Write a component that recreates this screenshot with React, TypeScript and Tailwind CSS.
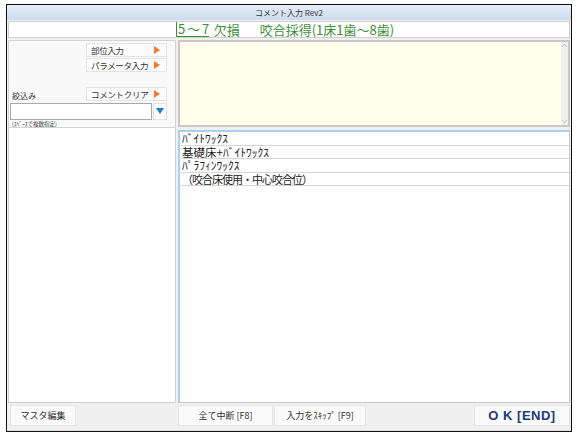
const jp = { fontFamily: '"Noto Sans CJK JP", "Noto Sans", sans-serif' };

function Arrow() {
  return (
    <svg width="6" height="8" viewBox="0 0 6 8" className="shrink-0">
      <path d="M0 0 L6 4 L0 8 Z" fill="#f27b2f" />
    </svg>
  );
}

function SideButton({ label }: { label: string }) {
  return (
    <div className="flex h-[14px] w-[81px] items-center justify-between border border-[#e4e4e4] bg-[#fbfbfb] pl-[4px] pr-[6px]">
      <span className="text-[8.5px] leading-none tracking-[-0.3px] text-[#333]">{label}</span>
      <Arrow />
    </div>
  );
}

function BottomButton({ label, className }: { label: string; className: string }) {
  return (
    <div className={`flex h-[21px] items-center justify-center border border-[#e6e6e6] bg-[#fafafa] text-[9px] text-[#333] ${className}`}>
      {label}
    </div>
  );
}

const rows = [
  { text: "ﾊﾞｲﾄﾜｯｸｽ", size: "text-[11.5px]" },
  { text: "基礎床+ﾊﾞｲﾄﾜｯｸｽ", size: "text-[11.5px]" },
  { text: "ﾊﾟﾗﾌｨﾝﾜｯｸｽ", size: "text-[11.5px]" },
  { text: "（咬合床使用・中心咬合位）", size: "text-[11px] tracking-[-1px]" },
];

export default function App() {
  return (
    <div className="h-[438px] w-[580px] bg-white pl-[6px] pt-[4px]" style={jp}>
      <div className="flex h-[428px] w-[566px] flex-col border border-[#111] bg-[#f0f0f0]">
        {/* title bar */}
        <div className="flex h-[15px] items-center justify-center bg-gradient-to-b from-[#e6eef8] to-[#cbdbee] text-[8px] leading-none text-[#333]">
          コメント入力 Rev2
        </div>

        {/* header */}
        <div className="mx-[1px] mt-[1px] flex h-[17px] items-center justify-center border border-[#cfcfcf] bg-white pr-[8px] text-[13px] leading-none text-[#3c8f3c]">
          <span className="border-b border-l border-[#3c8f3c] pb-[1px] pl-[1px] tracking-[-0.5px]">5 ～ 7</span>
          <span className="ml-[5px]">欠損</span>
          <span className="ml-[20px]">咬合採得(1床1歯～8歯)</span>
        </div>

        {/* main */}
        <div className="mt-[2px] flex h-[363px] gap-[1px] pl-[1px] pr-[1px]">
          {/* left panel */}
          <div className="flex w-[168px] flex-col">
            <div className="flex h-[88px] flex-col border border-[#d4d4d4] bg-[#f9f9f9]">
              <div className="mt-[2px] flex flex-col items-end gap-[1px] pr-[8px]">
                <SideButton label="部位入力" />
                <SideButton label="パラメータ入力" />
              </div>
              <div className="mt-[15px] flex items-end justify-between pr-[8px]">
                <span className="pb-[1px] pl-[3px] text-[8px] leading-none text-[#333]">絞込み</span>
                <SideButton label="コメントクリア" />
              </div>
              <div className="mt-[2px] flex h-[17px] items-stretch gap-[1px] pl-[1px] pr-[8px]">
                <div className="flex-1 border border-[#a9a9a9] bg-white" />
                <div className="flex w-[14px] items-center justify-center border border-[#e4e4e4] bg-[#fbfbfb]">
                  <svg width="8" height="6" viewBox="0 0 8 6">
                    <path d="M0 0 L8 0 L4 6 Z" fill="#1d7ad8" />
                  </svg>
                </div>
              </div>
              <div className="mt-[2px] pl-[3px] text-[5.5px] leading-none text-[#444]">(ｽﾍﾟｰｽで複数指定)</div>
            </div>
            <div className="flex-1 border border-t-0 border-[#cfcfcf] bg-white" />
          </div>

          {/* right column */}
          <div className="flex flex-1 flex-col gap-[3px] pl-[1px]">
            <div className="flex h-[87px] border-2 border-[#c8c8c8] bg-[#ffffec]">
              <div className="flex-1" />
              <div className="flex w-[7px] flex-col items-center justify-between bg-[#f0f0f0] py-[2px]">
                <svg width="5" height="3" viewBox="0 0 5 3">
                  <path d="M0 3 L2.5 0 L5 3" fill="none" stroke="#b8b8b8" strokeWidth="0.8" />
                </svg>
                <svg width="5" height="3" viewBox="0 0 5 3">
                  <path d="M0 0 L2.5 3 L5 0" fill="none" stroke="#b8b8b8" strokeWidth="0.8" />
                </svg>
              </div>
            </div>
            <div className="flex-1 border-l-2 border-t-2 border-r border-b border-l-[#a9cff3] border-t-[#a9cff3] border-r-[#c8c8c8] border-b-[#c8c8c8] bg-white pl-[1px]">
              {rows.map((r) => (
                <div
                  key={r.text}
                  className={`h-[13.5px] border-b border-[#d6d6d6] pl-[1px] leading-[13px] text-[#222] ${r.size}`}
                >
                  {r.text}
                </div>
              ))}
            </div>
          </div>
        </div>

        {/* bottom bar */}
        <div className="mt-[2px] flex items-center pl-[3px] pr-[1px]">
          <BottomButton label="マスタ編集" className="w-[66px]" />
          <BottomButton label="全て中断 [F8]" className="ml-[102px] w-[95px]" />
          <BottomButton label="入力をｽｷｯﾌﾟ [F9]" className="ml-[1px] w-[92px]" />
          <div className="ml-auto flex h-[21px] w-[96px] items-center justify-center border border-[#e6e6e6] bg-[#fafafa] text-[13px] font-bold tracking-[0.5px] text-[#1f3a78]" style={{ fontFamily: '"Liberation Sans", "Noto Sans CJK JP", sans-serif' }}>
            O K [END]
          </div>
        </div>
        <div className="mt-auto h-[1px] bg-[#e0e0e0]" />
      </div>
    </div>
  );
}
